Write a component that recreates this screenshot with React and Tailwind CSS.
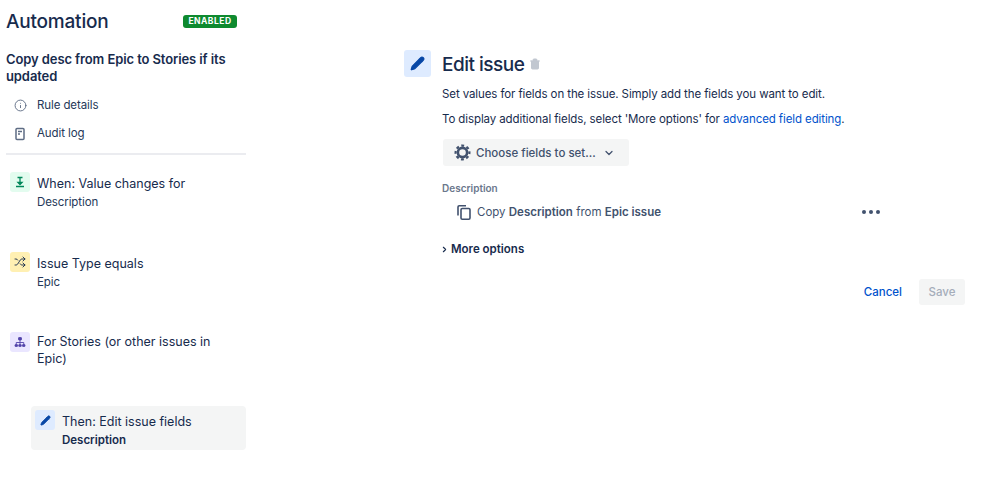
import React from "react";
import { ChevronDown, ChevronRight, Info, Pencil, Shuffle, Trash2 } from "lucide-react";

function StepIcon({ bg, children }) {
  return <div className={`w-5 h-5 rounded-[3px] flex items-center justify-center shrink-0 ${bg}`}>{children}</div>;
}

function AuditIcon() {
  return (
    <svg width="12" height="14" viewBox="0 0 12 14" fill="none" stroke="#5e6c84" strokeWidth="1.5">
      <rect x="2" y="1.5" width="8" height="11" rx="1" />
      <path d="M4 4.5h4M4 7h2" />
    </svg>
  );
}

function ValueIcon() {
  return (
    <svg width="12" height="12" viewBox="0 0 12 12" fill="none" stroke="#00875a" strokeWidth="1.3">
      <path d="M3.5 1.5h5M2 10.5h8M6 2v6" />
      <path d="M4 6.5h4L6 8.5z" fill="#00875a" />
    </svg>
  );
}

function TreeIcon() {
  return (
    <svg width="12" height="12" viewBox="0 0 12 12" fill="#5243aa" stroke="#5243aa">
      <rect x="4.5" y="1.5" width="3" height="2.5" rx=".5" strokeWidth=".8" />
      <rect x="1" y="8.5" width="2.5" height="2" rx=".5" strokeWidth=".8" />
      <rect x="4.75" y="8.5" width="2.5" height="2" rx=".5" strokeWidth=".8" />
      <rect x="8.5" y="8.5" width="2.5" height="2" rx=".5" strokeWidth=".8" />
      <path d="M6 4v4.5M2.25 8.5V6.5h7.5v2" fill="none" strokeWidth=".9" />
    </svg>
  );
}

function GearIcon() {
  return (
    <svg width="17" height="17" viewBox="0 0 17 17" fill="none" stroke="#42526e">
      <circle cx="8.5" cy="8.5" r="4.6" strokeWidth="2.6" />
      <circle cx="8.5" cy="8.5" r="6.9" strokeWidth="2.2" strokeDasharray="2.9 2.52" strokeDashoffset="1.45" />
    </svg>
  );
}

function CopyIcon() {
  return (
    <svg width="14" height="15" viewBox="0 0 14 15" fill="none" stroke="#42526e" strokeWidth="1.6">
      <rect x="4" y="3.5" width="9" height="10.7" rx="1.2" />
      <path d="M1 10.5V2a1.2 1.2 0 0 1 1.2-1.2H9" />
    </svg>
  );
}

export default function App() {
  return (
    <div className="w-[998px] h-[487px] bg-white flex font-['Inter',sans-serif] text-[#172b4d] overflow-hidden">
      <aside className="w-[240px] ml-[6px] shrink-0 flex flex-col">
        <div className="flex items-center justify-between h-[28px] mt-[7px] pr-[9px]">
          <h1 className="text-[19px] leading-[28px] pt-[1px] font-medium tracking-[-0.2px]">Automation</h1>
          <span className="w-[54px] h-[13px] rounded-[3px] bg-[#0e8a2f] text-white text-[8.5px] leading-[13px] font-bold tracking-[0.5px] text-center">ENABLED</span>
        </div>

        <h2 className="mt-[16px] text-[13px] leading-[17px] font-semibold tracking-[-0.1px]">Copy desc from Epic to Stories if its updated</h2>

        <div className="mt-[12px] pl-[8px] flex items-center gap-[10px] h-[16px] text-[11.5px] tracking-[-0.1px] text-[#253858]">
          <Info size={13} strokeWidth={1.7} color="#5e6c84" />
          <span className="pt-[1px]">Rule details</span>
        </div>
        <div className="mt-[13px] pl-[8px] flex items-center gap-[11px] h-[16px] text-[11.5px] tracking-[-0.1px] text-[#253858]">
          <AuditIcon />
          <span>Audit log</span>
        </div>
        <div className="mt-[11px] h-[2px] bg-[#ebecf0]" />

        <div className="mt-[17px] pl-[4px] flex gap-[7px] h-[80px]">
          <StepIcon bg="bg-[#e3fcef]"><ValueIcon /></StepIcon>
          <div className="pt-[1px]">
            <div className="text-[12.5px] leading-[22px]">When: Value changes for</div>
            <div className="text-[11.5px] leading-[15px] tracking-[-0.1px] text-[#253858]">Description</div>
          </div>
        </div>

        <div className="pl-[4px] flex gap-[7px] h-[80px]">
          <StepIcon bg="bg-[#fff0b3]"><Shuffle size={12} strokeWidth={1.8} color="#172b4d" /></StepIcon>
          <div className="pt-[1px]">
            <div className="text-[12.5px] leading-[22px]">Issue Type equals</div>
            <div className="text-[11.5px] leading-[15px] tracking-[-0.1px] text-[#253858]">Epic</div>
          </div>
        </div>

        <div className="pl-[4px] flex gap-[7px] h-[74px]">
          <StepIcon bg="bg-[#eae6ff]"><TreeIcon /></StepIcon>
          <div className="text-[12.5px] leading-[17px] pt-[1px] w-[190px]">For Stories (or other issues in Epic)</div>
        </div>

        <div className="ml-[25px] h-[44px] rounded-[4px] bg-[#f4f5f5] flex gap-[7px] pl-[4px] pt-[4px]">
          <StepIcon bg="bg-[#deebff]"><Pencil size={11} fill="#0747a6" color="#0747a6" /></StepIcon>
          <div className="pt-[1px]">
            <div className="text-[12.5px] leading-[22px]">Then: Edit issue fields</div>
            <div className="text-[11.5px] leading-[15px] font-semibold">Description</div>
          </div>
        </div>
      </aside>

      <main className="ml-[158px] w-[561px] shrink-0 flex gap-[11px] pt-[50px]">
        <div className="w-[27px] h-[27px] rounded-[3px] bg-[#deebff] flex items-center justify-center shrink-0">
          <Pencil size={15} fill="#0747a6" color="#0747a6" />
        </div>
        <div className="flex-1 flex flex-col">
          <div className="flex items-center gap-[5px] h-[28px]">
            <h2 className="text-[19px] leading-[28px] pt-[1px] font-medium tracking-[-0.5px]">Edit issue</h2>
            <Trash2 size={12} color="#c1c7d0" fill="#c1c7d0" />
          </div>
          <p className="mt-[8px] text-[11.5px] leading-[16px] tracking-[-0.1px]">Set values for fields on the issue. Simply add the fields you want to edit.</p>
          <p className="mt-[9px] text-[11.5px] leading-[16px] tracking-[-0.1px]">
            To display additional fields, select 'More options' for <span className="text-[#0052cc]">advanced field editing</span>.
          </p>
          <button className="mt-[12px] ml-[1px] w-[186px] h-[27px] rounded-[3px] bg-[#f4f5f5] flex items-center pl-[11px] text-[11.5px] font-medium text-[#42526e]">
            <GearIcon />
            <span className="ml-[5px] pt-[2px]">Choose fields to set...</span>
            <ChevronDown size={12} strokeWidth={2.5} className="ml-[7px]" />
          </button>
          <div className="mt-[15px] text-[10px] leading-[14px] font-semibold text-[#6b778c]">Description</div>
          <div className="mt-[9px] ml-[15px] flex items-center h-[16px] text-[11.5px] text-[#42526e]">
            <CopyIcon />
            <span className="ml-[6px] pt-[1px]">Copy <b className="font-semibold">Description</b> from <b className="font-semibold">Epic issue</b></span>
            <span className="ml-auto mr-[85px] flex gap-[3px]">
              <i className="w-[4px] h-[4px] rounded-full bg-[#42526e]" />
              <i className="w-[4px] h-[4px] rounded-full bg-[#42526e]" />
              <i className="w-[4px] h-[4px] rounded-full bg-[#42526e]" />
            </span>
          </div>
          <div className="mt-[21px] flex items-center h-[16px] text-[11.5px] font-semibold">
            <ChevronRight size={9} strokeWidth={3} className="-ml-[2px]" />
            <span className="ml-[2px] pt-[1px]">More options</span>
          </div>
          <div className="mt-[22px] flex items-center justify-end gap-[17px] text-[11.5px] font-medium">
            <span className="text-[#0052cc] pt-[1px]">Cancel</span>
            <button className="w-[46px] h-[26px] rounded-[3px] bg-[#f4f5f5] text-[#a5adba] pt-[1px]">Save</button>
          </div>
        </div>
      </main>
    </div>
  );
}
